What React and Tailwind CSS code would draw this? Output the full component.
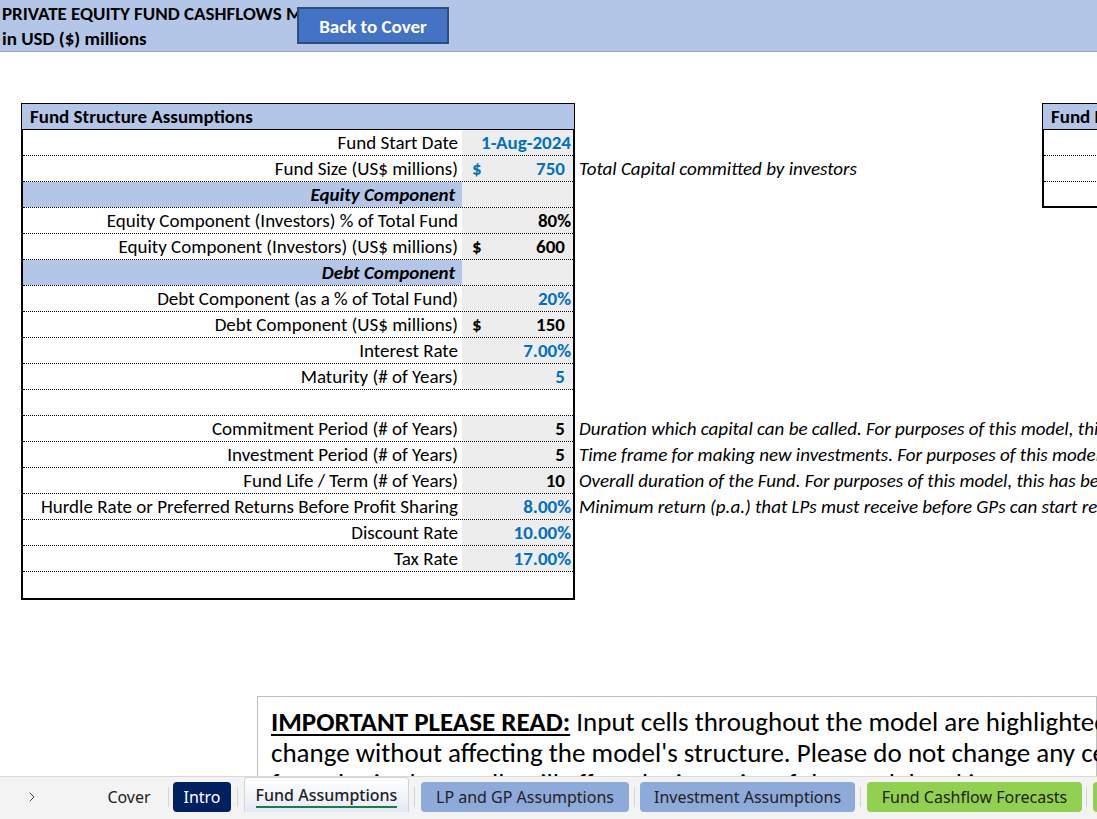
import { ChevronRight } from "lucide-react";

const rows = [
  { label: "Fund Start Date", value: "1-Aug-2024", blue: true, pct: true },
  { label: "Fund Size (US$ millions)", dollar: true, value: "750", blue: true, note: "Total Capital committed by investors" },
  { section: "Equity Component" },
  { label: "Equity Component (Investors) % of Total Fund", value: "80%", pct: true },
  { label: "Equity Component (Investors) (US$ millions)", dollar: true, value: "600" },
  { section: "Debt Component" },
  { label: "Debt Component (as a % of Total Fund)", value: "20%", blue: true, pct: true },
  { label: "Debt Component (US$ millions)", dollar: true, value: "150" },
  { label: "Interest Rate", value: "7.00%", blue: true, pct: true },
  { label: "Maturity (# of Years)", value: "5", blue: true },
  { empty: true },
  {
    label: "Commitment Period (# of Years)",
    value: "5",
    note: "Duration which capital can be called. For purposes of this model, this is assumed to be the same as the Investment Period.",
  },
  {
    label: "Investment Period (# of Years)",
    value: "5",
    note: "Time frame for making new investments. For purposes of this model, this is assumed to be 5 years.",
  },
  {
    label: "Fund Life / Term (# of Years)",
    value: "10",
    note: "Overall duration of the Fund. For purposes of this model, this has been set to 10 years.",
  },
  {
    label: "Hurdle Rate or Preferred Returns Before Profit Sharing",
    value: "8.00%",
    blue: true,
    pct: true,
    note: "Minimum return (p.a.) that LPs must receive before GPs can start receiving carried interest.",
  },
  { label: "Discount Rate", value: "10.00%", blue: true, pct: true },
  { label: "Tax Rate", value: "17.00%", blue: true, pct: true },
  { empty: true, last: true },
];

const Row = ({ row }) => {
  const border = row.last ? "" : "border-b border-dotted border-black";
  if (row.empty) {
    return <div className={`h-[26px] ${border}`} />;
  }
  return (
    <div className={`flex h-[26px] ${border}`}>
      <div
        className={`w-[439px] shrink-0 flex items-center justify-end whitespace-nowrap pt-[1px] ${
          row.section ? "bg-[#b4c6e7] font-bold italic pr-[7px]" : "pr-[4px]"
        }`}
      >
        {row.section || row.label}
      </div>
      <div
        className={`flex-1 flex items-center bg-[#ededed] font-bold pt-[1px] ${
          row.blue ? "text-[#0070c0]" : "text-black"
        } ${row.pct ? "pr-[2px]" : "pr-[8px]"}`}
      >
        {row.dollar && <span className="pl-[10px]">$</span>}
        <span className="ml-auto">{row.value}</span>
      </div>
    </div>
  );
};

const Tab = ({ children, className }) => (
  <div className={`shrink-0 mt-[5px] h-[30px] flex items-center justify-center rounded-[4px] ${className}`}>
    {children}
  </div>
);

const Sep = ({ className }) => <div className={`shrink-0 mt-[10px] w-px h-[20px] bg-[#d4d4d4] ${className}`} />;

export default function App() {
  return (
    <div className="w-[1097px] h-[819px] overflow-hidden bg-white text-black font-['Carlito','Lato',sans-serif] text-[19px]">
      <div className="h-[776px] overflow-hidden relative">
        {/* header band */}
        <div className="h-[52px] bg-[#b4c6e7] border-b border-[#9ea7b3] pl-[2px] pt-[1px] font-bold leading-[25px]">
          <div className="whitespace-nowrap">PRIVATE EQUITY FUND CASHFLOWS MODEL</div>
          <div>in USD ($) millions</div>
        </div>
        <button className="absolute left-[297px] top-[7px] w-[152px] h-[37px] bg-[#4472c4] border-2 border-[#2f4d7a] text-white font-bold text-[19px] leading-none pt-[2px]">
          Back to Cover
        </button>

        {/* tables */}
        <div className="flex mt-[51px] ml-[21px]">
          <div className="w-[554px] shrink-0">
            <div className="h-[27px] border border-black bg-[#b4c6e7] flex items-center pl-[8px] pt-[1px] font-bold">
              Fund Structure Assumptions
            </div>
            <div className="border-x-2 border-b-2 border-black">
              {rows.map((row, i) => (
                <Row key={i} row={row} />
              ))}
            </div>
          </div>

          <div className="w-[467px] shrink-0 pt-[27px] italic whitespace-nowrap">
            {rows.map((row, i) => (
              <div key={i} className="h-[26px] flex items-center pl-[4px] pt-[1px]">
                {row.note || ""}
              </div>
            ))}
          </div>

          <div className="w-[200px] shrink-0">
            <div className="h-[27px] border border-black bg-[#b4c6e7] flex items-center pl-[8px] pt-[1px] font-bold whitespace-nowrap">
              Fund Returns Summary
            </div>
            <div className="border-l-2 border-b-2 border-black">
              <div className="h-[26px] border-b border-dotted border-black" />
              <div className="h-[26px] border-b border-dotted border-black" />
              <div className="h-[24px]" />
            </div>
          </div>
        </div>

        {/* important note */}
        <div className="ml-[257px] mt-[96px] border border-[#bfbfbf] pl-[13px] pt-[9px] text-[27px] leading-[31px] whitespace-nowrap">
          <div>
            <span className="font-bold underline underline-offset-[3px]">IMPORTANT PLEASE READ:</span> Input cells
            throughout the model are highlighted in blue font and grey shading, which you can
          </div>
          <div>change without affecting the model's structure. Please do not change any cells with black font, as</div>
          <div>formulas in these cells will affect the integrity of the model and its outputs.</div>
        </div>
      </div>

      {/* sheet tabs */}
      <div className="h-[43px] bg-[#f3f3f3] border-t border-[#d9d9d9] flex items-start whitespace-nowrap font-['Noto_Sans',sans-serif] text-[16px] text-[#222]">
        <div className="shrink-0 w-[64px] h-[40px] flex items-center justify-center text-[#444]">
          <ChevronRight size={16} strokeWidth={1.5} />
        </div>
        <Tab className="ml-[30px] w-[70px]">Cover</Tab>
        <Sep className="ml-[4px]" />
        <Tab className="ml-[4px] w-[58px] bg-[#002060] text-white">Intro</Tab>
        <Sep className="ml-[6px]" />
        <div className="shrink-0 ml-[6px] w-[165px] h-[35px] rounded-t-[4px] border border-[#d4d4d4] border-b-0 bg-gradient-to-b from-white to-[#e3eaf6] flex flex-col items-center justify-center">
          <div className="leading-[22px] text-[#1f1f1f] font-medium border-b-2 border-[#1e7b45] pt-[2px]">
            Fund Assumptions
          </div>
        </div>
        <Sep className="ml-[5px]" />
        <Tab className="ml-[6px] w-[208px] bg-[#8eaadb]">LP and GP Assumptions</Tab>
        <Sep className="ml-[5px]" />
        <Tab className="ml-[5px] w-[215px] bg-[#8eaadb]">Investment Assumptions</Tab>
        <Sep className="ml-[5px]" />
        <Tab className="ml-[6px] w-[215px] bg-[#92d050]">Fund Cashflow Forecasts</Tab>
        <Sep className="ml-[4px]" />
        <Tab className="ml-[6px] w-[200px] bg-[#92d050] justify-start pl-[12px]">Returns Analysis</Tab>
      </div>
    </div>
  );
}
